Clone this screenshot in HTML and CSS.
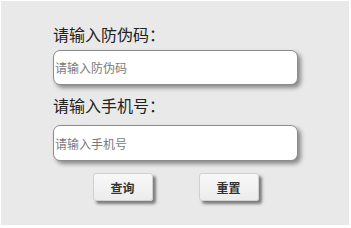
FILE: index.html
```html
<!DOCTYPE html>
<html lang="zh-CN">
  <head>
    <meta charset="UTF-8" />
    <meta name="viewport" content="width=device-width, initial-scale=1.0" />
    <title>防伪查询</title>
    <link rel="stylesheet" href="styles.css">
  </head>
  <body>
    <div class="panel">
      <form class="query-form" onsubmit="return false">
        <label class="field-label" for="code">请输入防伪码：</label>
        <input class="field-input" id="code" type="text" placeholder="请输入防伪码" />
        <label class="field-label" for="phone">请输入手机号：</label>
        <input class="field-input phone" id="phone" type="text" placeholder="请输入手机号" />
        <div class="actions">
          <button type="button" class="btn">查询</button>
          <button type="reset" class="btn">重置</button>
        </div>
      </form>
    </div>
  </body>
</html>
```

FILE: styles.css
```css
body {
  margin: 0;
  padding: 0;
  background: #fff;
  font-family: "Noto Sans CJK SC", "Liberation Sans", sans-serif;
  color: #222;
}
.panel {
  margin: 1px;
  width: 348px;
  height: 224px;
  box-sizing: border-box;
  background: #e9e9e9;
  padding: 22px 0 0 52px;
}
.query-form {
  display: flex;
  flex-direction: column;
  width: 245px;
}
.field-label {
  font-size: 16px;
  line-height: 22px;
  color: #222;
}
.field-input {
  margin: 5px 0 9px;
  height: 35px;
  box-sizing: border-box;
  padding: 0 1px;
  border: 1px solid #8c8c8c;
  border-radius: 7px;
  background: #fff;
  box-shadow: 3px 3px 4px #8a8a8a;
  font-family: inherit;
  font-size: 12px;
  outline: none;
}
.field-input.phone {
  margin-top: 9px;
  margin-bottom: 8px;
  height: 36px;
}
.field-input::placeholder {
  color: #7a7a7a;
}
.actions {
  display: flex;
  justify-content: center;
  gap: 46px;
  margin-top: 4px;
}
.btn {
  width: 60px;
  height: 28px;
  border: 1px solid #d0d0d0;
  border-radius: 3px;
  background: linear-gradient(#f8f8f8, #ececec);
  box-shadow: 3px 3px 3px #7c7c7c;
  font-family: inherit;
  font-size: 12px;
  font-weight: bold;
  color: #333;
  cursor: pointer;
}
```
